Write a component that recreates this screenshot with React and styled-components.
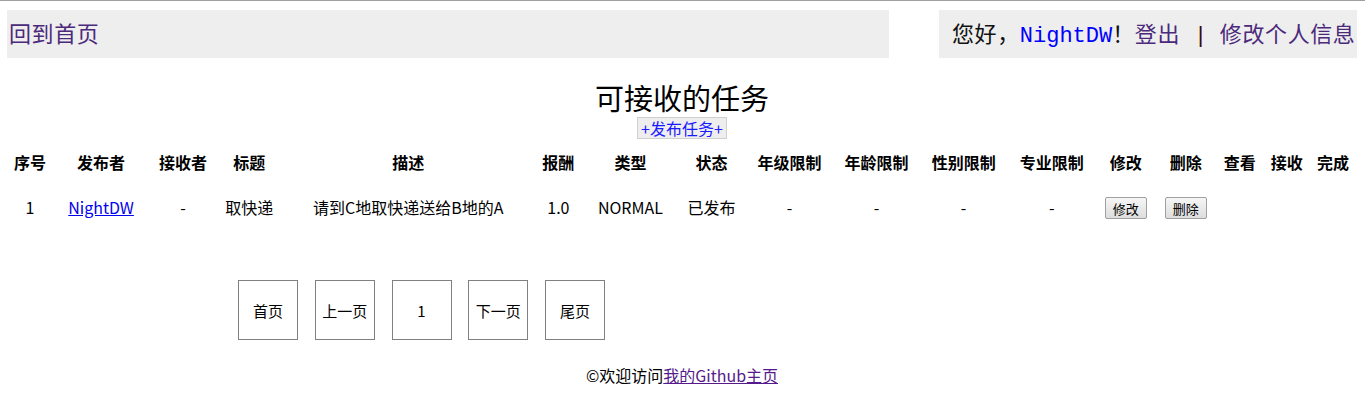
import React from 'react';
import styled, { createGlobalStyle } from 'styled-components';

const GlobalStyle = createGlobalStyle`
  html, body {
    margin: 0;
    padding: 0;
    background: #fff;
  }
  body {
    border-top: 1px solid #a0a0a0;
    font-family: "Noto Sans CJK SC", sans-serif;
    color: #000;
  }
`;

const columns = [
  ['序号', 44], ['发布者', 98], ['接收者', 66], ['标题', 66], ['描述', 252],
  ['报酬', 48], ['类型', 96], ['状态', 66], ['年级限制', 90], ['年龄限制', 84],
  ['性别限制', 90], ['专业限制', 86], ['修改', 62], ['删除', 58], ['查看', 50],
  ['接收', 44], ['完成', 48],
];

const tasks = [
  {
    id: 1, publisher: 'NightDW', receiver: '-', title: '取快递',
    desc: '请到C地取快递送给B地的A', reward: '1.0', type: 'NORMAL', status: '已发布',
    grade: '-', age: '-', gender: '-', major: '-',
  },
];

const App = () => {
  return (
    <>
      <GlobalStyle />
      <Page>
        <TopBar>
          <NavBox>
            <NavText>
              <NavLink href="#">回到首页</NavLink>
            </NavText>
          </NavBox>
          <NavBox $right>
            <NavText>
              您好，<UserName>NightDW</UserName>！<NavLink href="#">登出</NavLink>
              <Divider>|</Divider>
              <NavLink href="#">修改个人信息</NavLink>
            </NavText>
          </NavBox>
        </TopBar>

        <Title>可接收的任务</Title>
        <PublishRow>
          <PublishButton href="#">+发布任务+</PublishButton>
        </PublishRow>

        <TaskTable>
          <colgroup>
            {columns.map(([name, w]) => (
              <col key={name} style={{ width: w }} />
            ))}
          </colgroup>
          <thead>
            <HeadRow>
              {columns.map(([name]) => (
                <Th key={name}>{name}</Th>
              ))}
            </HeadRow>
          </thead>
          <tbody>
            {tasks.map((t) => (
              <BodyRow key={t.id}>
                <Td>{t.id}</Td>
                <Td><UserLink href="#">{t.publisher}</UserLink></Td>
                <Td>{t.receiver}</Td>
                <Td>{t.title}</Td>
                <Td>{t.desc}</Td>
                <Td>{t.reward}</Td>
                <Td>{t.type}</Td>
                <Td>{t.status}</Td>
                <Td>{t.grade}</Td>
                <Td>{t.age}</Td>
                <Td>{t.gender}</Td>
                <Td>{t.major}</Td>
                <Td><SmallButton>修改</SmallButton></Td>
                <Td><SmallButton>删除</SmallButton></Td>
                <Td />
                <Td />
                <Td />
              </BodyRow>
            ))}
          </tbody>
        </TaskTable>

        <Pager>
          <PageBox>首页</PageBox>
          <PageBox>上一页</PageBox>
          <PageBox>1</PageBox>
          <PageBox>下一页</PageBox>
          <PageBox>尾页</PageBox>
        </Pager>

        <Footer>
          ©欢迎访问<FooterLink href="#">我的Github主页</FooterLink>
        </Footer>
      </Page>
    </>
  );
};

const Page = styled.div`
  padding: 9px 8px 20px 7px;
`;

const TopBar = styled.div`
  display: flex;
  justify-content: space-between;
  align-items: stretch;
`;

const NavBox = styled.div`
  display: flex;
  align-items: center;
  height: 48px;
  width: ${(p) => (p.$right ? '418px' : '882px')};
  padding: ${(p) => (p.$right ? '5px 0 0 13px' : '5px 0 0 2px')};
  box-sizing: border-box;
  background: #eeeeee;
  font-family: "Liberation Mono", "Noto Sans CJK SC", monospace;
  font-size: 22px;
  color: #111;
  white-space: nowrap;
`;

const NavText = styled.span`
  line-height: 30px;
  letter-spacing: 0.6px;
`;

const NavLink = styled.a`
  color: #4b2a7b;
  text-decoration: none;
`;

const UserName = styled.span`
  color: #0000ff;
  letter-spacing: 0;
`;

const Divider = styled.span`
  margin: 0 12px 0 14px;
  color: #3a0a0a;
`;

const Title = styled.h2`
  margin: 21px 0 0;
  text-align: center;
  font-size: 29px;
  line-height: 36px;
  font-weight: normal;
  font-family: "Noto Sans CJK SC", serif;
`;

const PublishRow = styled.div`
  display: flex;
  justify-content: center;
  margin-top: 2px;
`;

const PublishButton = styled.a`
  display: inline-flex;
  align-items: center;
  height: 22px;
  padding: 0 3px;
  box-sizing: border-box;
  border: 1px solid #cfcfcf;
  background: #eeeeee;
  color: #1a1aff;
  font-size: 16px;
  text-decoration: none;
`;

const TaskTable = styled.table`
  margin-top: 5px;
  margin-left: 1px;
  width: 1349px;
  table-layout: fixed;
  border-collapse: collapse;
  font-size: 16px;
`;

const HeadRow = styled.tr`
  height: 36px;
`;

const BodyRow = styled.tr`
  height: 54px;
`;

const Th = styled.th`
  padding: 0;
  text-align: center;
  font-weight: bold;
  white-space: nowrap;
`;

const Td = styled.td`
  padding: 0;
  text-align: center;
  white-space: nowrap;
`;

const UserLink = styled.a`
  color: #0000ee;
  text-decoration: underline;
`;

const SmallButton = styled.button`
  height: 22px;
  padding: 0 7px;
  font-family: "Noto Sans CJK SC", sans-serif;
  font-size: 13px;
  color: #000;
  background: linear-gradient(#f6f6f6, #dddddd);
  border: 1px solid #a0a0a0;
  border-radius: 2px;
`;

const Pager = styled.div`
  display: flex;
  gap: 16.75px;
  margin: 46px 0 0 231px;
`;

const PageBox = styled.div`
  width: 60px;
  height: 60px;
  box-sizing: border-box;
  border: 1px solid #808080;
  display: flex;
  align-items: center;
  justify-content: center;
  font-size: 15px;
`;

const Footer = styled.div`
  margin-top: 25px;
  text-align: center;
  font-size: 16px;
  line-height: 20px;
`;

const FooterLink = styled.a`
  color: #551a8b;
  text-decoration: underline;
`;

export default App;
